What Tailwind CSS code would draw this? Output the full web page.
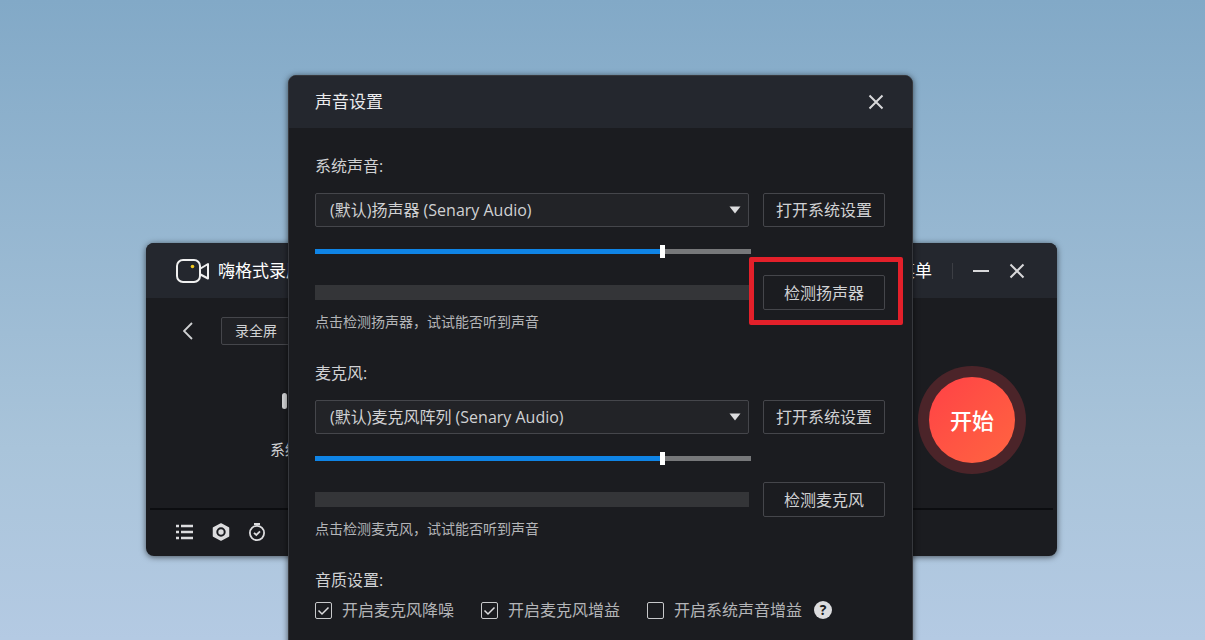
<!DOCTYPE html>
<html lang="zh-CN">
<head>
    <meta charset="UTF-8">
    <meta name="viewport" content="width=device-width, initial-scale=1.0">
    <title>声音设置</title>
    <script src="https://cdn.jsdelivr.net/npm/@tailwindcss/browser@4"></script>
</head>
<body class="font-['Open_Sans','Noto_Sans_CJK_SC',sans-serif] text-[#d0d1d3]">

    <!-- Desktop -->
    <main class="relative h-screen overflow-hidden bg-linear-to-b from-[#82a9c7] via-[#a9c4da] via-70% to-[#b4cae3]">

        <!-- Recorder window -->
        <section class="absolute left-[146px] top-[243px] flex h-[313px] w-[911px] flex-col overflow-hidden rounded-lg bg-[#1b1c20] shadow-[0_1px_6px_rgba(0,0,0,0.6)]">
            <header class="flex h-[55px] shrink-0 items-center justify-between bg-[#24272e] pl-[30px] pr-8">
                <div class="flex items-center gap-2">
                    <svg class="h-6 w-[34px]" viewBox="0 0 34 24" fill="none" stroke="#f0f0f0" stroke-width="2" stroke-linejoin="round">
                        <rect x="1" y="1" width="23" height="22" rx="6"/>
                        <path d="M24.500 9.500L32 5V19.500L24.500 15.500"/>
                        <circle cx="16.500" cy="7.500" r="1.800" fill="#f2c81e" stroke="none"/>
                    </svg>
                    <h1 class="text-[17px] leading-6 text-white">嗨格式录屏大师</h1>
                </div>
                <div class="flex items-center">
                    <button class="text-[17px] leading-6 text-white">菜单</button>
                    <span class="ml-5 h-4 w-px bg-[#3c3e44]"></span>
                    <button aria-label="最小化" class="ml-5">
                        <svg class="size-4" viewBox="0 0 16 16" stroke="#d8d8da" stroke-width="2"><path d="M0 8H16"/></svg>
                    </button>
                    <button aria-label="关闭" class="ml-5">
                        <svg class="size-4" viewBox="0 0 16 16" stroke="#d8d8da" stroke-width="2"><path d="M1.500 1.500L14.500 14.500M14.500 1.500L1.500 14.500"/></svg>
                    </button>
                </div>
            </header>

            <div class="flex grow items-center justify-between pl-[37px] pr-[31px]">
                <div class="flex flex-col self-stretch pt-[19px]">
                    <div class="flex items-center gap-7">
                        <button aria-label="返回">
                            <svg class="h-[18px] w-[10px]" viewBox="0 0 10 18" fill="none" stroke="#d0d1d3" stroke-width="1.800"><path d="M9 1L1 9L9 17"/></svg>
                        </button>
                        <button class="h-7 w-24 rounded-xs border border-[#45464b] bg-[#202125] pl-[13px] text-left text-sm">录全屏</button>
                    </div>
                    <div class="ml-[87px] mt-12 flex flex-col gap-[30px]">
                        <span class="ml-3 h-4 w-[5px] rounded-full bg-[#d0d1d3]"></span>
                        <span class="text-[15px] leading-5">系统声音</span>
                    </div>
                </div>
                <button class="mt-[34px] size-[108px] rounded-full bg-[#4b2429] p-[11px]">
                    <span class="flex size-full items-center justify-center rounded-full bg-linear-to-br from-[#ff4046] to-[#ff6440] text-[22px] font-medium text-white">开始</span>
                </button>
            </div>

            <footer class="mx-1 flex h-12 shrink-0 items-center gap-[18px] border-t-2 border-[#0c0d10] px-[26px] pb-[3px] text-[#dcdcde]">
                <button aria-label="列表">
                    <svg class="size-[18px]" viewBox="0 0 18 18" stroke="currentColor" stroke-width="2.500"><path d="M0 3H3M5 3H17M0 9H3M5 9H17M0 15H3M5 15H17"/></svg>
                </button>
                <button aria-label="设置">
                    <svg class="size-[18px]" viewBox="0 0 18 18" fill="none"><path d="M9 1L16.500 5V13L9 17L1.500 13V5Z" fill="currentColor" stroke="currentColor" stroke-width="1.500" stroke-linejoin="round"/><circle cx="9" cy="9" r="3.700" stroke="#1b1c20" stroke-width="2"/></svg>
                </button>
                <button aria-label="定时">
                    <svg class="size-[18px]" viewBox="0 0 18 18" fill="none" stroke="currentColor" stroke-width="1.800"><circle cx="9" cy="10" r="7.100"/><path d="M6 1H12" stroke-width="2"/><path d="M6 9.800L8.300 12L12 8.300"/></svg>
                </button>
            </footer>
        </section>

        <!-- Sound settings dialog -->
        <section role="dialog" aria-labelledby="dialog-title" class="absolute left-[288px] top-[75px] w-[625px] overflow-hidden rounded-lg border border-[#36383d] bg-[#1b1c20] shadow-[0_1px_6px_rgba(0,0,0,0.6)]">
            <header class="flex h-[52px] items-center justify-between bg-[#24272e] pl-[26px] pr-7">
                <h2 id="dialog-title" class="text-[17px] leading-6 text-[#ececee]">声音设置</h2>
                <button aria-label="关闭">
                    <svg class="size-4" viewBox="0 0 16 16" stroke="#d8d8da" stroke-width="2"><path d="M1.500 1.500L14.500 14.500M14.500 1.500L1.500 14.500"/></svg>
                </button>
            </header>

            <div class="pb-16 pl-[26px] pr-[27px] pt-[26px]">
                <!-- System sound -->
                <div class="mb-[29px]">
                    <label for="speaker" class="mb-[15px] block leading-6">系统声音:</label>
                    <div class="flex gap-[14px]">
                        <div class="relative grow">
                            <select id="speaker" class="h-[34px] w-full appearance-none rounded-xs border border-[#45464b] bg-[#222327] pl-[14px]">
                                <option>(默认)扬声器 (Senary Audio)</option>
                            </select>
                            <svg class="pointer-events-none absolute right-2 top-[13px] h-2 w-3" viewBox="0 0 12 8" fill="#dcdcde"><path d="M0.500 0.500H11.500L6 7.500Z"/></svg>
                        </div>
                        <button class="h-[34px] w-[122px] rounded-xs border border-[#45464b]">打开系统设置</button>
                    </div>
                    <input type="range" min="0" max="100" value="80" aria-label="系统音量" class="my-[14px] block h-5 w-[436px] appearance-none bg-transparent [&::-webkit-slider-runnable-track]:h-[5px] [&::-webkit-slider-runnable-track]:bg-[linear-gradient(to_right,#0f84e6_80%,#77787a_80%)] [&::-webkit-slider-thumb]:-mt-1 [&::-webkit-slider-thumb]:h-[13px] [&::-webkit-slider-thumb]:w-[5px] [&::-webkit-slider-thumb]:appearance-none [&::-webkit-slider-thumb]:bg-white">
                    <div class="flex items-center gap-[14px]">
                        <div class="h-[15px] grow bg-[#343538]"></div>
                        <div class="relative">
                            <button class="block h-[35px] w-[122px] rounded-xs border border-[#45464b]">检测扬声器</button>
                            <span class="pointer-events-none absolute -bottom-[15px] -left-[14px] -right-[18px] -top-[18px] rounded-xs border-[5px] border-[#e3202a]"></span>
                        </div>
                    </div>
                    <p class="mt-[2px] text-sm leading-5 text-[#b4b5b8]">点击检测扬声器，试试能否听到声音</p>
                </div>

                <!-- Microphone -->
                <div class="mb-[29px]">
                    <label for="mic" class="mb-[15px] block leading-6">麦克风:</label>
                    <div class="flex gap-[14px]">
                        <div class="relative grow">
                            <select id="mic" class="h-[34px] w-full appearance-none rounded-xs border border-[#45464b] bg-[#222327] pl-[14px]">
                                <option>(默认)麦克风阵列 (Senary Audio)</option>
                            </select>
                            <svg class="pointer-events-none absolute right-2 top-[13px] h-2 w-3" viewBox="0 0 12 8" fill="#dcdcde"><path d="M0.500 0.500H11.500L6 7.500Z"/></svg>
                        </div>
                        <button class="h-[34px] w-[122px] rounded-xs border border-[#45464b]">打开系统设置</button>
                    </div>
                    <input type="range" min="0" max="100" value="80" aria-label="麦克风音量" class="my-[14px] block h-5 w-[436px] appearance-none bg-transparent [&::-webkit-slider-runnable-track]:h-[5px] [&::-webkit-slider-runnable-track]:bg-[linear-gradient(to_right,#0f84e6_80%,#77787a_80%)] [&::-webkit-slider-thumb]:-mt-1 [&::-webkit-slider-thumb]:h-[13px] [&::-webkit-slider-thumb]:w-[5px] [&::-webkit-slider-thumb]:appearance-none [&::-webkit-slider-thumb]:bg-white">
                    <div class="flex items-center gap-[14px]">
                        <div class="h-[15px] grow bg-[#343538]"></div>
                        <button class="block h-[35px] w-[122px] rounded-xs border border-[#45464b]">检测麦克风</button>
                    </div>
                    <p class="mt-[2px] text-sm leading-5 text-[#b4b5b8]">点击检测麦克风，试试能否听到声音</p>
                </div>

                <!-- Quality -->
                <h3 class="leading-6">音质设置:</h3>
                <div class="mt-[6px] flex items-center text-[#b4b5b8]">
                    <label class="mr-[27px] flex items-center gap-[10px] leading-6">
                        <span class="relative size-[17px]">
                            <input type="checkbox" checked class="peer block size-[17px] appearance-none rounded-xs border border-[#c8c9cb]">
                            <svg class="pointer-events-none absolute inset-0 hidden size-[17px] peer-checked:block" viewBox="0 0 17 17" fill="none" stroke="#dcdcde" stroke-width="1.500"><path d="M3.500 8.500L7 12L13.500 5.500"/></svg>
                        </span>
                        开启麦克风降噪
                    </label>
                    <label class="mr-[27px] flex items-center gap-[10px] leading-6">
                        <span class="relative size-[17px]">
                            <input type="checkbox" checked class="peer block size-[17px] appearance-none rounded-xs border border-[#c8c9cb]">
                            <svg class="pointer-events-none absolute inset-0 hidden size-[17px] peer-checked:block" viewBox="0 0 17 17" fill="none" stroke="#dcdcde" stroke-width="1.500"><path d="M3.500 8.500L7 12L13.500 5.500"/></svg>
                        </span>
                        开启麦克风增益
                    </label>
                    <label class="mr-3 flex items-center gap-[10px] leading-6">
                        <input type="checkbox" class="block size-[17px] appearance-none rounded-xs border border-[#c8c9cb]">
                        开启系统声音增益
                    </label>
                    <button aria-label="帮助" class="size-[18px] rounded-full bg-[#dcdcde] text-sm font-bold leading-[18px] text-[#1b1c20]">?</button>
                </div>
            </div>
        </section>
    </main>

</body>
</html>
